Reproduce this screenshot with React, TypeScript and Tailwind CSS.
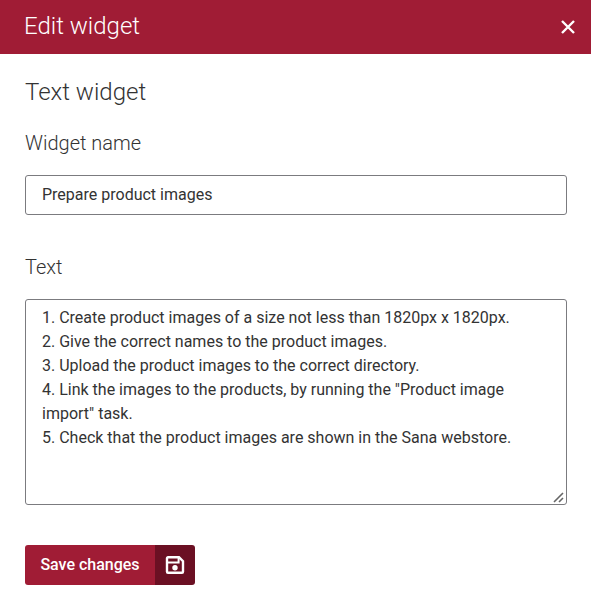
const lines = [
  "1. Create product images of a size not less than 1820px x 1820px.",
  "2. Give the correct names to the product images.",
  "3. Upload the product images to the correct directory.",
  '4. Link the images to the products, by running the "Product image import" task.',
  "5. Check that the product images are shown in the Sana webstore.",
];

export default function App() {
  return (
    <div className="w-[591px] h-[609px] bg-white font-['Roboto',sans-serif] overflow-hidden">
      {/* Header */}
      <div className="h-[54px] bg-[#a01c35] flex items-center justify-between pl-[24px] pr-[15px]">
        <h1 className="text-[24px] font-light text-white leading-none -mt-[2px]">Edit widget</h1>
        <button className="w-[16px] h-[16px] flex items-center justify-center">
          <svg viewBox="0 0 16 16" className="w-[16px] h-[16px]" fill="none" stroke="white" strokeWidth="2.4">
            <path d="M2 2 L14 14 M14 2 L2 14" />
          </svg>
        </button>
      </div>

      <div className="pl-[25px] pr-[24px]">
        <h2 className="text-[24px] font-light text-[#333] leading-[28px] mt-[24px]">Text widget</h2>

        <label className="block text-[20px] font-light text-[#333] leading-[24px] mt-[25px]">Widget name</label>
        <input
          readOnly
          value="Prepare product images"
          className="block w-full h-[40px] mt-[20px] pl-[16px] pr-[16px] pb-[2px] border border-[#7b7b7f] rounded-[3px] text-[16px] text-[#333] outline-none"
        />

        <label className="block text-[20px] font-light text-[#333] leading-[24px] mt-[40px]">Text</label>
        <div className="relative mt-[20px] h-[206px] border border-[#7b7b7f] rounded-[3px] px-[16px] pt-[6px] text-[16px] leading-[24px] text-[#333]">
          {lines.map((line) => (
            <p key={line}>{line}</p>
          ))}
          <svg viewBox="0 0 12 12" className="absolute right-[1px] bottom-[1px] w-[12px] h-[12px]" fill="none" stroke="#666" strokeWidth="1.6">
            <path d="M1 11 L10 2 M6 11 L10 7" />
          </svg>
        </div>

        <button className="flex mt-[40px] h-[40px] w-[170px] rounded-[3px] overflow-hidden text-white">
          <span className="w-[130px] h-full bg-[#a01c35] flex items-center justify-center text-[16px] font-medium">Save changes</span>
          <span className="w-[40px] h-full bg-[#6b1023] flex items-center justify-center">
            <svg viewBox="0 0 20 20" className="w-[20px] h-[20px]" fill="none" stroke="white" strokeWidth="2.4">
              <path d="M3 2.2 H14 L18 6.2 V16.8 a1 1 0 0 1 -1 1 H3 a1 1 0 0 1 -1 -1 V3.2 a1 1 0 0 1 1 -1 Z" />
              <path d="M3 7.6 H13.6 V3" strokeWidth="2" />
              <circle cx="10" cy="12.8" r="2.7" fill="white" stroke="none" />
            </svg>
          </span>
        </button>
      </div>
    </div>
  );
}
